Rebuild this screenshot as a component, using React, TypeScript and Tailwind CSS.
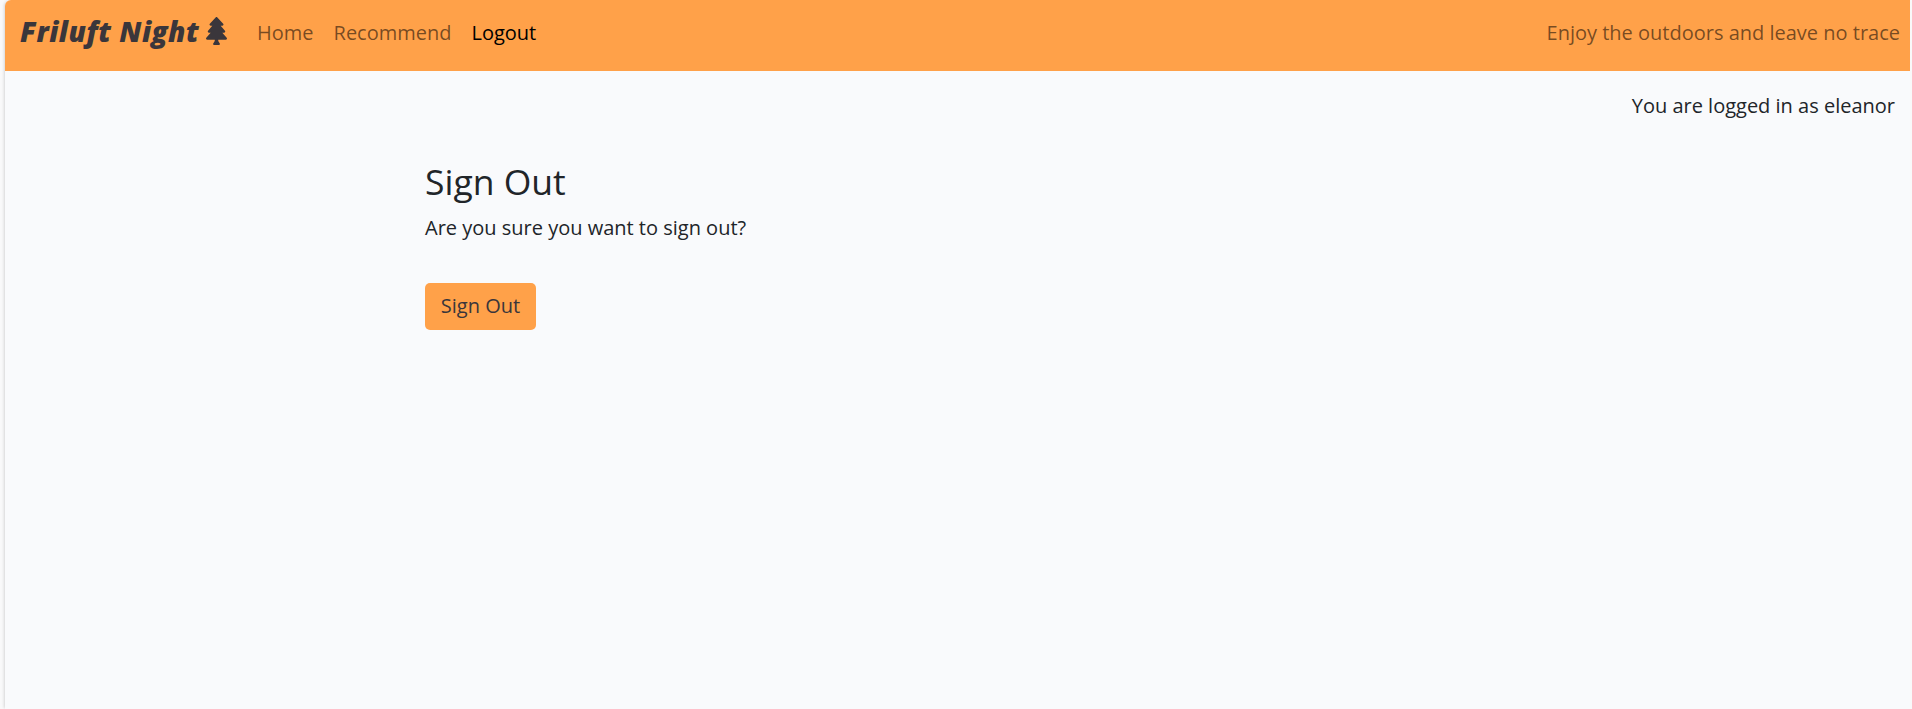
import { FaTree } from "react-icons/fa";

const links = [
  { label: "Home", active: false },
  { label: "Recommend", active: false },
  { label: "Logout", active: true },
];

export default function App() {
  return (
    <div className="h-[709px] bg-[#f9f9fa] pl-[5px] pr-[2px] font-['Open_Sans',sans-serif] text-[20px] leading-[30px] text-[#212529]">
      <div className="h-full overflow-hidden rounded-tl-[6px] bg-[#f9fafc] shadow-[-2px_0_3px_-1px_rgba(0,0,0,0.14)]">
        <nav className="flex h-[71px] items-start bg-[#ffa149] pl-[15px] pr-[10px] pt-[10px]">
          <a className="flex h-[41px] w-[227px] shrink-0 items-center whitespace-nowrap text-[#3a363b]" href="#">
            <span className="w-[186px] text-[28px] font-extrabold italic leading-[40px] tracking-[0.5px]">Friluft Night</span>
            <FaTree className="h-[28px] w-[21px] shrink-0" />
          </a>
          <div className="flex pt-[8px]">
            {links.map((l) => (
              <a key={l.label} href="#" className={l.active ? "px-[10px] text-black" : "px-[10px] text-black/55"}>
                {l.label}
              </a>
            ))}
          </div>
          <span className="ml-auto pt-[8px] text-black/55">Enjoy the outdoors and leave no trace</span>
        </nav>
        <p className="pr-[15px] pt-[20px] text-right">You are logged in as eleanor</p>
        <main className="pl-[420px] pt-[36px]">
          <h2 className="text-[35.5px] font-medium leading-[48px]">Sign Out</h2>
          <p className="pt-[8px]">Are you sure you want to sign out?</p>
          <button className="mt-[40px] h-[47px] w-[111px] rounded-[5px] bg-[#ffa149] pb-[2px] text-[#3a363b]">Sign Out</button>
        </main>
      </div>
    </div>
  );
}
